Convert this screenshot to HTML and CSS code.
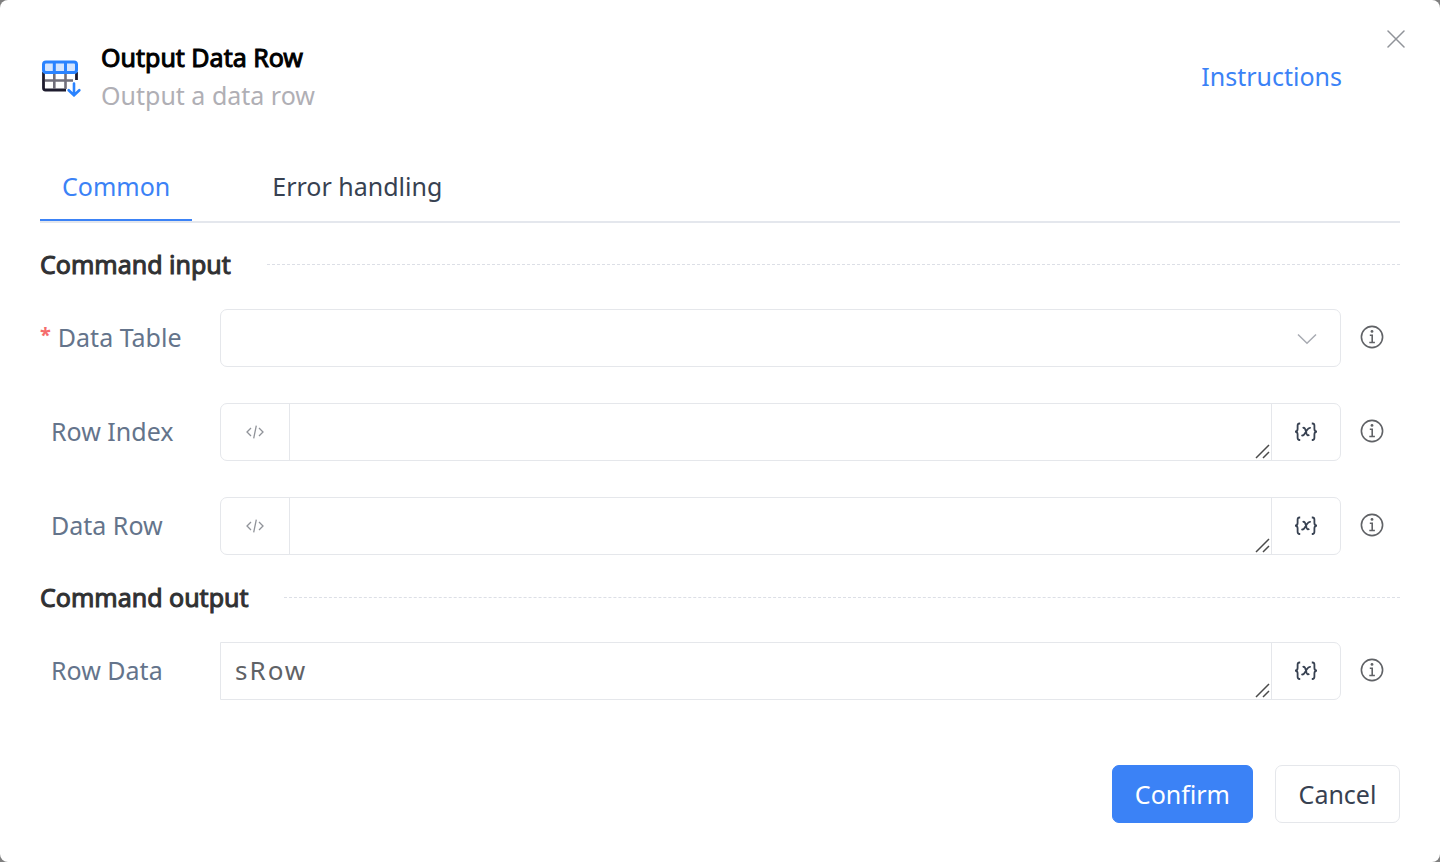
FILE: index.html
```html
<!DOCTYPE html>
<html lang="en">
<head>
<meta charset="utf-8">
<title>Output Data Row</title>
<link rel="stylesheet" href="styles.css">
</head>
<body>
<svg class="sprite" aria-hidden="true">
  <symbol id="info" viewBox="0 0 24 24">
    <circle cx="12" cy="12" r="10.6" fill="none" stroke="currentColor" stroke-width="1.6"/>
    <circle cx="12" cy="6.4" r="1.4" fill="currentColor"/>
    <path d="M9.800 10.200h2.400v7.200M9.300 17.500h5.600" fill="none" stroke="currentColor" stroke-width="1.600"/>
  </symbol>
  <symbol id="code" viewBox="0 0 18 14">
    <path d="M5 3 1 7l4 4M13 3l4 4-4 4M10.300.7 7.700 13.300" fill="none" stroke="currentColor" stroke-width="1.300"/>
  </symbol>
  <symbol id="variable" viewBox="0 0 24 20">
    <path d="M6.200 1.500H5.600Q3.600 1.500 3.600 3.500V7Q3.600 9.600 1 9.600Q3.600 9.600 3.600 12.200V15.800Q3.600 18 5.600 18H6.200M17.800 1.500H18.400Q20.400 1.500 20.400 3.500V7Q20.400 9.600 23 9.600Q20.400 9.600 20.400 12.200V15.800Q20.400 18 18.400 18H17.800" fill="none" stroke="currentColor" stroke-width="1.800"/>
    <path d="M8.700 6.200Q10.400 5 11.200 7.200L12.700 12Q13.500 14.200 15.300 12.800M16.800 6Q14.700 5.300 13 8L10.700 11.800Q9.200 14.200 7.400 13.300" fill="none" stroke="currentColor" stroke-width="1.800"/>
  </symbol>
  <symbol id="grip" viewBox="0 0 15 15">
    <path d="M1 14 14 1M8 14l6-6" fill="none" stroke="currentColor" stroke-width="1.500"/>
  </symbol>
</svg>
<main class="dialog" role="dialog" aria-labelledby="title">
  <button class="close" type="button" aria-label="Close">
    <svg width="18" height="18" viewBox="0 0 18 18"><path d="M1 1l16 16M17 1 1 17" fill="none" stroke="currentColor" stroke-width="1.500" stroke-linecap="round"/></svg>
  </button>
  <header class="header">
    <svg class="logo" width="42" height="42" viewBox="0 -2 42 42" aria-hidden="true">
      <path d="M3.500 15V31Q3.500 33 5.500 33H26M36.500 15v8" fill="none" stroke="#1e1c2e" stroke-width="2.800"/>
      <path d="M5 23.500H33M14.300 15v17M25.500 15v17" fill="none" stroke="#716f7b" stroke-width="2.600"/>
      <rect x="3.500" y="5" width="33" height="10.500" rx="2.500" fill="#d4e5ff" stroke="#2a83ff" stroke-width="3"/>
      <path d="M14.300 5v10M25.500 5v10" stroke="#2a83ff" stroke-width="3"/>
      <path d="M34 26.500v12M28.700 33.200 34 38.300l5.300-5.100" fill="none" stroke="#2a83ff" stroke-width="2.600" stroke-linecap="round" stroke-linejoin="round"/>
    </svg>
    <div class="titles">
      <h1 class="title" id="title">Output Data Row</h1>
      <p class="subtitle">Output a data row</p>
    </div>
    <a class="instructions" href="#">Instructions</a>
  </header>
  <nav class="tabs" role="tablist">
    <button class="tab tab-active" type="button" role="tab" aria-selected="true">Common</button>
    <button class="tab" type="button" role="tab" aria-selected="false">Error handling</button>
  </nav>
  <form class="form">
    <h2 class="section">Command input</h2>
    <div class="rows">
      <div class="row">
        <label class="label label-required" for="table">Data Table</label>
        <div class="field">
          <select class="select" id="table"><option></option></select>
          <svg class="arrow" width="20" height="12" viewBox="0 0 20 12" aria-hidden="true"><path d="M1 1.500 10 10.200 19 1.500" fill="none" stroke="currentColor" stroke-width="1.500"/></svg>
        </div>
        <button class="info" type="button" aria-label="About Data Table"><svg width="24" height="24"><use href="#info"/></svg></button>
      </div>
      <div class="row">
        <label class="label" for="index">Row Index</label>
        <div class="field">
          <button class="addon addon-code" type="button" aria-label="Code"><svg width="18" height="14"><use href="#code"/></svg></button>
          <div class="box"><textarea class="text" id="index" rows="1"></textarea><svg class="grip" width="15" height="15"><use href="#grip"/></svg></div>
          <button class="addon addon-variable" type="button" aria-label="Variable"><svg width="24" height="20"><use href="#variable"/></svg></button>
        </div>
        <button class="info" type="button" aria-label="About Row Index"><svg width="24" height="24"><use href="#info"/></svg></button>
      </div>
      <div class="row">
        <label class="label" for="datarow">Data Row</label>
        <div class="field">
          <button class="addon addon-code" type="button" aria-label="Code"><svg width="18" height="14"><use href="#code"/></svg></button>
          <div class="box"><textarea class="text" id="datarow" rows="1"></textarea><svg class="grip" width="15" height="15"><use href="#grip"/></svg></div>
          <button class="addon addon-variable" type="button" aria-label="Variable"><svg width="24" height="20"><use href="#variable"/></svg></button>
        </div>
        <button class="info" type="button" aria-label="About Data Row"><svg width="24" height="24"><use href="#info"/></svg></button>
      </div>
    </div>
    <h2 class="section">Command output</h2>
    <div class="rows">
      <div class="row">
        <label class="label" for="rowdata">Row Data</label>
        <div class="field field-output">
          <div class="box"><textarea class="text" id="rowdata" rows="1">sRow</textarea><svg class="grip" width="15" height="15"><use href="#grip"/></svg></div>
          <button class="addon addon-variable" type="button" aria-label="Variable"><svg width="24" height="20"><use href="#variable"/></svg></button>
        </div>
        <button class="info" type="button" aria-label="About Row Data"><svg width="24" height="24"><use href="#info"/></svg></button>
      </div>
    </div>
    <footer class="footer">
      <button class="button button-primary" type="button">Confirm</button>
      <button class="button" type="button">Cancel</button>
    </footer>
  </form>
</main>
</body>
</html>
```
FILE: styles.css
```css
* { box-sizing: border-box; }
body {
  margin: 0;
  background: #7f7f7f;
  font-family: "Noto Sans", "Open Sans", sans-serif;
  font-size: 25px;
  line-height: 38px;
  color: #374151;
}
button, textarea, select { font: inherit; color: inherit; margin: 0; }
button { padding: 0; border: 0; background: none; cursor: pointer; }
svg { display: block; }
.sprite { position: absolute; width: 0; height: 0; }
.dialog {
  position: relative;
  min-height: 100vh;
  padding: 38px 40px 39px;
  background: #fff;
  border-radius: 8px;
}
.close { position: absolute; top: 30px; right: 34px; padding: 0; color: #909399; }
.close svg { margin: 0 1px; }
.header { display: flex; align-items: center; }
.titles { flex: 1; margin-left: 19px; }
.title, .section { font-size: 25px; font-weight: 400; -webkit-text-stroke: 1px currentColor; }
.title { margin: 0; color: #000; }
.subtitle { margin: 0; color: #b0afb5; }
.instructions { margin-right: 58px; color: #3b82f6; text-decoration: none; }
.tabs {
  display: flex;
  gap: 58px;
  margin-top: 39px;
  border-bottom: 2px solid #e4e7ed;
}
.tab { padding: 14px 22px; border-bottom: 2px solid transparent; }
.tab-active { color: #3b82f6; border-color: #3b82f6; }
.section {
  display: flex;
  align-items: center;
  gap: 36px;
  margin: 22px 0 26px;
  color: #303133;
}
.rows + .section { margin-top: 23px; }
.section::after { content: ""; flex: 1; border-top: 1px dashed #dcdfe6; }
.rows { display: flex; flex-direction: column; gap: 36px; }
.row { display: flex; align-items: center; }
.label { width: 180px; padding: 0 0 2px 11px; color: #64748b; }
.label-required { display: flex; gap: 7px; padding-left: 0; }
.label-required::before { content: "*"; color: #f56c6c; font-size: 20px; font-weight: 700; line-height: 34px; }
.field {
  position: relative;
  display: flex;
  flex: 1;
  height: 58px;
  border: 1px solid #e5e7eb;
  border-radius: 7px;
}
.field-output { border-radius: 0 7px 7px 0; }
.select { width: 100%; padding: 0 14px; border: 0; border-radius: 7px; background: none; appearance: none; }
.arrow { position: absolute; top: 23px; right: 23px; color: #a8abb2; pointer-events: none; }
.addon { display: flex; align-items: center; justify-content: center; width: 69px; }
.addon-code { border-right: 1px solid #e5e7eb; color: #909399; }
.addon-variable { border-left: 1px solid #e5e7eb; color: #374151; }
.box { position: relative; flex: 1; }
.text {
  display: block;
  width: 100%;
  height: 56px;
  padding: 8px 14px;
  border: 0;
  background: none;
  resize: none;
  overflow: hidden;
  color: #606266;
  font-size: 26px;
  letter-spacing: 2px;
}
.grip { position: absolute; right: 1px; bottom: 1px; color: #4b4b4b; pointer-events: none; }
.info { margin: 0 16px 2px 19px; color: #606266; }
.footer { display: flex; justify-content: flex-end; gap: 22px; margin-top: 65px; }
.button { min-width: 125px; padding: 9px 22px; border: 1px solid #e5e7eb; border-radius: 7px; }
.button-primary { border-color: #3b82f6; background: #3b82f6; color: #fff; }
:focus-visible { outline: 2px solid #93c5fd; }
```
